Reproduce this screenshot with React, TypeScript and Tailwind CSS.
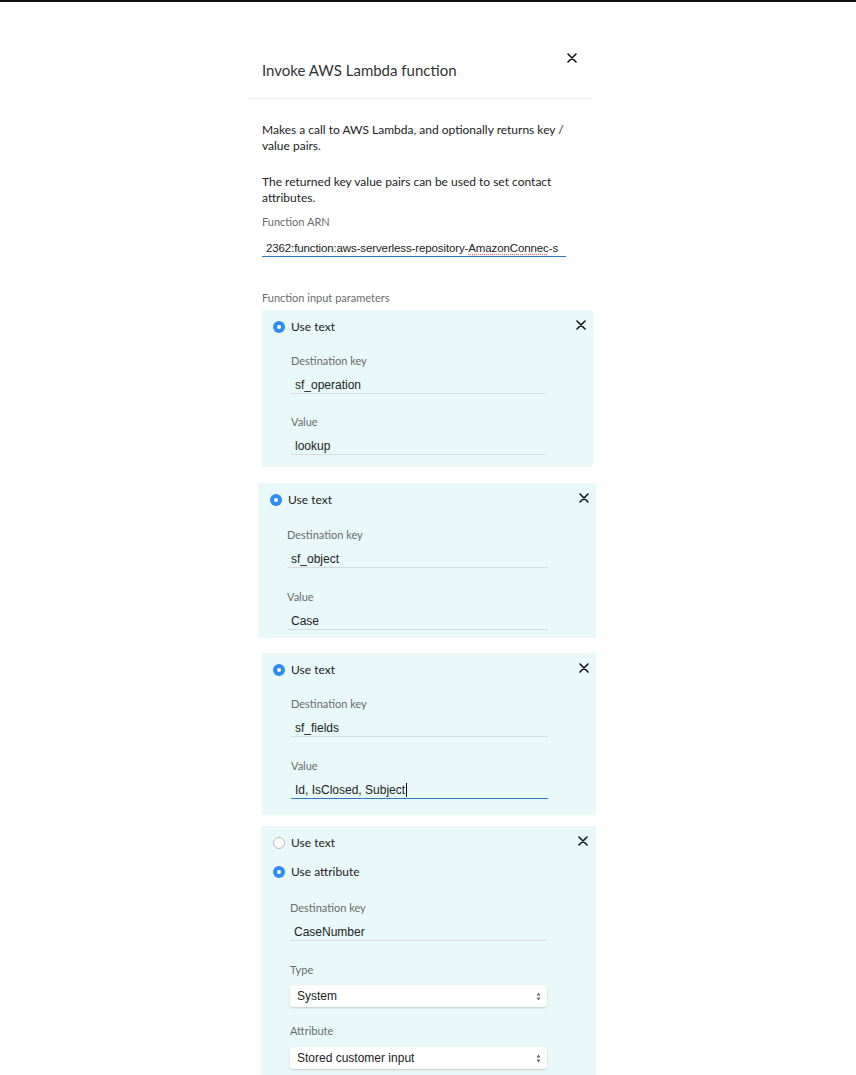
import React from 'react';

const ui = 'font-[Lato,"Open_Sans",sans-serif]';
const mono = "font-['Liberation_Sans',Arial,sans-serif]";

function Radio({ checked }: { checked: boolean }) {
  if (checked) {
    return (
      <span className="flex h-[12px] w-[12px] shrink-0 items-center justify-center rounded-full bg-[#2f8df2]">
        <span className="h-[4px] w-[4px] rounded-full bg-white" />
      </span>
    );
  }
  return <span className="h-[12px] w-[12px] shrink-0 rounded-full border border-[#b9b9b9] bg-white" />;
}

function CloseIcon({ size = 10 }: { size?: number }) {
  return (
    <svg width={size} height={size} viewBox="0 0 10 10" className="shrink-0">
      <path d="M1 1 L9 9 M9 1 L1 9" stroke="#111" strokeWidth="1.6" strokeLinecap="round" />
    </svg>
  );
}

function Label({ text, className = '' }: { text: string; className?: string }) {
  return <div className={`text-[11px] leading-[14px] text-[#6b6b6b] ${className}`}>{text}</div>;
}

function Input({
  value,
  focused = false,
  className = '',
  cursor = false,
}: {
  value: React.ReactNode;
  focused?: boolean;
  className?: string;
  cursor?: boolean;
}) {
  return (
    <div
      className={`flex items-center border-b pl-[4px] pt-[9px] text-[12px] leading-[16px] text-[#222] ${mono} ${
        focused ? 'border-[#2b7bc2]' : 'border-[#d6dcdc]'
      } ${className}`}
    >
      <span>{value}</span>
      {cursor && <span className="ml-px h-[14px] w-px bg-[#111]" />}
    </div>
  );
}

function Select({ value, className = '' }: { value: string; className?: string }) {
  return (
    <div
      className={`flex h-[22px] items-center justify-between rounded-[3px] bg-white pl-[7px] pr-[6px] text-[12px] text-[#222] shadow-[0_1px_2px_rgba(0,0,0,0.18)] ${mono} ${className}`}
    >
      <span>{value}</span>
      <svg width="5" height="9" viewBox="0 0 5 9">
        <path d="M2.5 0.5 L4.5 3.5 L0.5 3.5 Z M2.5 8.5 L4.5 5.5 L0.5 5.5 Z" fill="#666" />
      </svg>
    </div>
  );
}

function RadioRow({ checked, text, close, className = '' }: { checked: boolean; text: string; close?: boolean; className?: string }) {
  return (
    <div className={`flex items-center justify-between ${className}`}>
      <div className="flex items-center gap-[6px]">
        <Radio checked={checked} />
        <span className="text-[12px] leading-[16px] text-[#222]">{text}</span>
      </div>
      {close && (
        <span className="-mt-[4px]">
          <CloseIcon />
        </span>
      )}
    </div>
  );
}

export default function App() {
  return (
    <div className={`min-h-screen border-t-2 border-[#111] bg-white ${ui}`}>
      <div className="ml-[262px] w-[334px]">
        {/* header */}
        <div className="flex w-[315px] items-start justify-between pt-[51px]">
          <h1 className="mt-[7px] text-[15px] leading-[20px] text-[#333]">Invoke AWS Lambda function</h1>
          <CloseIcon />
        </div>
        <div className="-ml-[13px] mt-[18px] h-px w-[344px] bg-[#eceeee]" />

        <p className="mt-[23px] text-[12px] leading-[16px] text-[#222]">
          Makes a call to AWS Lambda, and optionally returns key /<br />
          value pairs.
        </p>
        <p className="mt-[20px] text-[12px] leading-[16px] text-[#222]">
          The returned key value pairs can be used to set contact
          <br />
          attributes.
        </p>

        <Label text="Function ARN" className="mt-[9px]" />
        <div
          className={`w-[304px] overflow-hidden whitespace-nowrap border-b border-[#2b7bc2] pl-[4px] pt-[11px] text-[11.5px] leading-[16px] tracking-[-0.12px] text-[#222] ${mono}`}
        >
          2362:function:aws-serverless-repository-
          <span className="underline decoration-red-400 decoration-dotted underline-offset-2">AmazonConnec</span>-s
        </div>

        <Label text="Function input parameters" className="mt-[34px]" />

        {/* parameter 1 */}
        <div className="mt-[5px] w-[331px] bg-[#e9f9f9] pb-[12px] pl-[11px] pr-[7px] pt-[9px]">
          <RadioRow checked text="Use text" close />
          <div className="ml-[18px] w-[254px]">
            <Label text="Destination key" className="mt-[19px]" />
            <Input value="sf_operation" />
            <Label text="Value" className="mt-[21px]" />
            <Input value="lookup" />
          </div>
        </div>

        {/* parameter 2 */}
        <div className="-ml-[4px] mt-[16px] w-[338px] bg-[#e9f9f9] pb-[8px] pl-[12px] pr-[7px] pt-[9px]">
          <RadioRow checked text="Use text" close />
          <div className="ml-[17px] w-[261px]">
            <Label text="Destination key" className="mt-[20px]" />
            <Input value="sf_object" />
            <Label text="Value" className="mt-[22px]" />
            <Input value="Case" />
          </div>
        </div>

        {/* parameter 3 */}
        <div className="mt-[15px] w-[334px] bg-[#e9f9f9] pb-[16px] pl-[11px] pr-[7px] pt-[9px]">
          <RadioRow checked text="Use text" close />
          <div className="ml-[18px] w-[257px]">
            <Label text="Destination key" className="mt-[19px]" />
            <Input value="sf_fields" />
            <Label text="Value" className="mt-[22px]" />
            <Input value="Id, IsClosed, Subject" focused cursor />
          </div>
        </div>

        {/* parameter 4 */}
        <div className="-ml-px mt-[11px] w-[335px] bg-[#e9f9f9] pb-[6px] pl-[12px] pr-[8px] pt-[9px]">
          <RadioRow checked={false} text="Use text" close />
          <RadioRow checked text="Use attribute" className="mt-[13px]" />
          <div className="ml-[17px] w-[257px]">
            <Label text="Destination key" className="mt-[21px]" />
            <Input value="CaseNumber" />
            <Label text="Type" className="mt-[22px]" />
            <Select value="System" className="mt-[8px]" />
            <Label text="Attribute" className="mt-[17px]" />
            <Select value="Stored customer input" className="mt-[9px]" />
          </div>
        </div>
      </div>
    </div>
  );
}
